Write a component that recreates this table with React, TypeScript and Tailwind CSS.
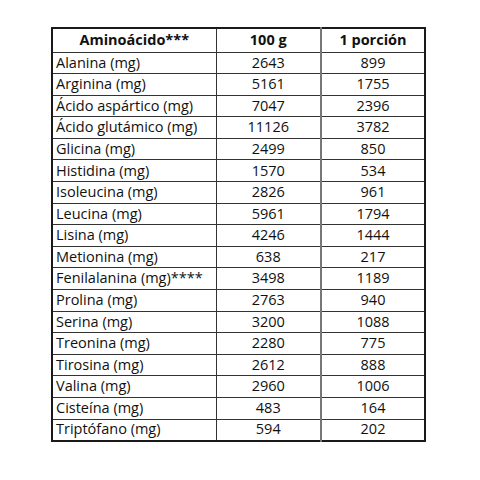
const rows: [string, string, string][] = [
  ['Alanina (mg)', '2643', '899'],
  ['Arginina (mg)', '5161', '1755'],
  ['Ácido aspártico (mg)', '7047', '2396'],
  ['Ácido glutámico (mg)', '11126', '3782'],
  ['Glicina (mg)', '2499', '850'],
  ['Histidina (mg)', '1570', '534'],
  ['Isoleucina (mg)', '2826', '961'],
  ['Leucina (mg)', '5961', '1794'],
  ['Lisina (mg)', '4246', '1444'],
  ['Metionina (mg)', '638', '217'],
  ['Fenilalanina (mg)****', '3498', '1189'],
  ['Prolina (mg)', '2763', '940'],
  ['Serina (mg)', '3200', '1088'],
  ['Treonina (mg)', '2280', '775'],
  ['Tirosina (mg)', '2612', '888'],
  ['Valina (mg)', '2960', '1006'],
  ['Cisteína (mg)', '483', '164'],
  ['Triptófano (mg)', '594', '202'],
];

export default function App() {
  return (
    <div className="w-[480px] h-[480px] bg-white pt-[27px] pl-[51px] text-[#111] font-['Open_Sans','Noto_Sans',sans-serif]">
      <table className="table-fixed border-collapse border-2 border-[#1a1a1a] text-[14.5px] leading-none">
        <thead>
          <tr className="h-[24px]">
            <th className="w-[164px] border border-[#333] font-bold text-center">Aminoácido***</th>
            <th className="w-[105px] border border-[#333] font-bold text-center">100 g</th>
            <th className="w-[104px] border border-[#333] border-l-2 border-l-[#777] font-bold text-center">1 porción</th>
          </tr>
        </thead>
        <tbody>
          {rows.map(([name, a, b]) => (
            <tr key={name} className="h-[21.6px]">
              <td className="border border-[#333] pl-[3px] text-left whitespace-nowrap">{name}</td>
              <td className="border border-[#333] text-center">{a}</td>
              <td className="border border-[#333] border-l-2 border-l-[#777] text-center">{b}</td>
            </tr>
          ))}
        </tbody>
      </table>
    </div>
  );
}
